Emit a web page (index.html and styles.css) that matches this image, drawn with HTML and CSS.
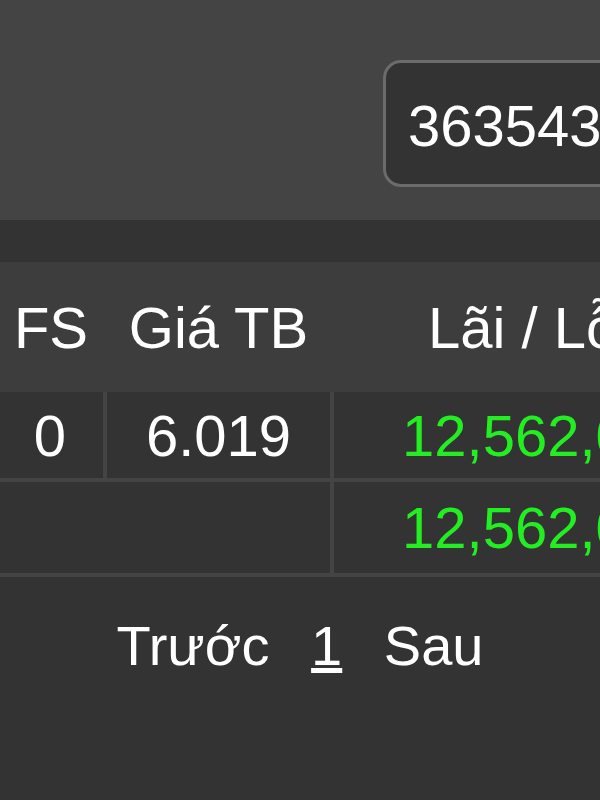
FILE: index.html
```html
<!DOCTYPE html>
<html lang="vi">
<head>
  <meta charset="UTF-8">
  <meta name="viewport" content="width=device-width, initial-scale=1.0">
  <title>Danh mục</title>
  <link rel="stylesheet" href="styles.css">
</head>
<body>

<div class="top">
  <input type="text" class="account" value="3635438">
</div>
<div class="band"></div>

<table class="portfolio">
  <thead>
    <tr>
      <th class="col-fs">FS</th>
      <th class="col-price">Giá TB</th>
      <th class="col-pl">Lãi / Lỗ</th>
    </tr>
  </thead>
  <tbody>
    <tr>
      <td class="col-fs">0</td>
      <td class="col-price">6.019</td>
      <td class="col-pl up">12,562,000</td>
    </tr>
    <tr class="sum">
      <td colspan="2"></td>
      <td class="col-pl up">12,562,000</td>
    </tr>
  </tbody>
</table>

<div class="pager">
  <span>Trước</span>
  <a href="#" class="page">1</a>
  <span>Sau</span>
</div>

</body>
</html>
```

FILE: styles.css
```css
body {
  margin: 0;
  width: 600px;
  height: 800px;
  overflow: hidden;
  background-color: #333;
  font-family: "Liberation Sans", Arial, sans-serif;
  color: #fff;
}
.top {
  height: 220px;
  background-color: #444;
  padding-top: 60px;
  padding-left: 383px;
  box-sizing: border-box;
}
.account {
  width: 320px;
  height: 127px;
  box-sizing: border-box;
  padding: 4px 0 0 22px;
  border: 3px solid #6b6b6b;
  border-radius: 18px;
  background-color: #333;
  color: #fff;
  font-family: "Liberation Sans", Arial, sans-serif;
  font-size: 58px;
  outline: none;
}
.band {
  height: 42px;
  background-color: #333;
}
.portfolio {
  border-collapse: collapse;
  table-layout: fixed;
  width: 760px;
  margin-left: -3px;
  font-size: 58px;
}
.portfolio th {
  height: 130px;
  background-color: #3d3d3d;
  font-weight: normal;
  padding: 0;
}
.portfolio td {
  background-color: #333;
  border: 4px solid #444;
  padding: 0;
  height: 86px;
}
.portfolio td:first-child {
  border-left: none;
}
.portfolio tbody tr:first-child td {
  border-top: none;
}
.portfolio .sum td {
  height: 91px;
}
.col-fs {
  width: 108px;
  text-align: center;
}
.col-price {
  width: 227px;
  text-align: center;
}
.portfolio th.col-pl {
  text-align: left;
  padding-left: 96px;
}
.portfolio td.col-pl {
  text-align: left;
  padding-left: 68px;
}
.up {
  color: #22ee22;
}
.pager {
  padding-top: 36px;
  text-align: center;
  font-size: 56px;
}
.pager span {
  margin: 0 4px;
}
.page {
  color: #fff;
  margin: 0 22px;
}
```
